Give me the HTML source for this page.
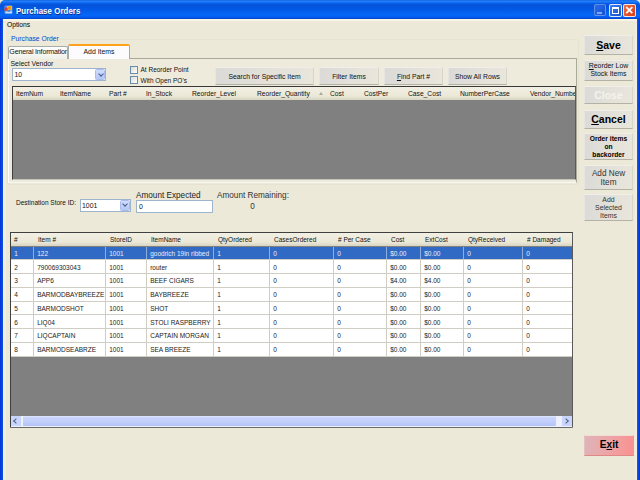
<!DOCTYPE html>
<html><head><meta charset="utf-8"><title>Purchase Orders</title>
<style>
html,body{margin:0;padding:0;}
body{width:640px;height:480px;overflow:hidden;background:#ece9d8;position:relative;font-family:"Liberation Sans",sans-serif;font-size:7px;color:#111;line-height:1;}
.a{position:absolute;white-space:nowrap;}
#tb{left:0;top:0;width:640px;height:19px;background:linear-gradient(#1868e0 0,#2080ff 9%,#0a5ee6 17%,#0452da 30%,#0358e4 45%,#0568f6 80%,#0458ee 93%,#0340c8 100%);border-radius:5px 5px 0 0;}
#bl{left:0;top:19px;width:5.5px;height:461px;background:linear-gradient(90deg,#0831d9 0,#0a50e0 45%,#1258e4 50%,#f3f0e2 56%,#f1eede 100%);}
#br{left:634.5px;top:19px;width:5.5px;height:461px;background:linear-gradient(90deg,#f1eede 0,#f3f0e2 44%,#1258e4 50%,#0a50e0 55%,#0831d9 100%);}
#bb{left:0;top:478px;width:640px;height:2px;background:#0a3fd6;}
#title{left:16px;top:6.7px;font-size:8.8px;font-weight:bold;color:#fff;letter-spacing:.1px;transform:scaleX(.89);transform-origin:0 0;text-shadow:.5px .5px 0 #0a2a8a;}
.wb{top:4px;width:12px;height:12px;border-radius:2px;border:.6px solid rgba(255,255,255,.85);box-sizing:border-box;}
.btn{background:linear-gradient(100deg,#dbdad8,#e2e0d8 50%,#e9e7dc);border:1px solid #d8d6cc;border-top-color:#efeee8;border-left-color:#e6e5e0;border-bottom-color:#b4b2a4;box-sizing:border-box;display:flex;align-items:center;justify-content:center;text-align:center;white-space:normal;}
.hdr{background:linear-gradient(#f2f0e4,#ebe8d7 70%,#d8d4c2);}
u{text-decoration-thickness:.7px;text-underline-offset:.6px;}
.cb{background:#fff;border:1px solid #9db4cc;box-sizing:border-box;font-size:6.9px;padding:3px 0 0 2px;}
.dd{width:11px;height:11px;border-radius:1.5px;background:linear-gradient(#d0dcfc,#b4c8f4);border:.5px solid #a8bcf0;box-sizing:border-box;}
.dd:after{content:"";position:absolute;left:2.5px;top:1.6px;width:3px;height:3px;border-right:1.7px solid #44588c;border-bottom:1.7px solid #44588c;transform:rotate(45deg);}
.ck{width:8px;height:8.2px;border:1px solid #6c8cac;background:linear-gradient(135deg,#dcdcd4,#fff);box-sizing:border-box;}
.g1h span,.g2h span{position:absolute;top:3.5px;}
.row{left:11px;width:561px;height:13.75px;background:#fff;font-size:6.5px;color:#222;box-sizing:border-box;border-bottom:1px solid #d0cec4;overflow:hidden}
.row span{position:absolute;top:0;height:13.75px;box-sizing:border-box;padding:4.3px 0 0 3.2px;border-right:1px solid #d0cec4;overflow:hidden}
.row.sel{background:#316ac5;color:#e8eefc}
.row.sel span{border-right-color:#8eaee0}
.arl,.arr{width:4px;height:4px;border-left:1.6px solid #4d6185;border-bottom:1.6px solid #4d6185;transform:rotate(45deg);box-sizing:border-box}
.arr{transform:rotate(-135deg)}
</style></head><body>
<div class="a" id="tb"></div>
<div class="a" id="bl"></div><div class="a" id="br"></div>
<!-- icon -->
<svg class="a" style="left:4.4px;top:5.3px" width="8.8" height="9.2" viewBox="0 0 14 15"><rect x="0.5" y="1" width="13" height="13" rx="1.5" fill="#5c92ec"/><rect x="5" y="1.5" width="8" height="6.5" fill="#f5c020"/><rect x="6.5" y="3" width="5" height="3.5" fill="#f08a28"/><ellipse cx="3.2" cy="7.2" rx="2.6" ry="3.6" fill="#e23c28"/><rect x="2.5" y="9.5" width="10.5" height="4" fill="#9cc4f4"/><rect x="5.5" y="8" width="4" height="3" fill="#3a8ad8"/><rect x="2" y="12.2" width="11" height="1.3" fill="#e8eefc"/></svg>
<div class="a" id="title">Purchase Orders</div>
<!-- window buttons -->
<div class="a wb" style="left:594px;background:linear-gradient(135deg,#2a6cec,#1550d0);border-color:rgba(255,255,255,.3)"></div>
<div class="a" style="left:597px;top:12px;width:5px;height:1.6px;background:#7fa8f4"></div>
<div class="a wb" style="left:609px;width:12.7px;height:12.6px;background:linear-gradient(135deg,#3a80f4,#1a50c8);"></div>
<div class="a" style="left:612px;top:7px;width:7px;height:7px;border:.8px solid #fff;border-top-width:2px;box-sizing:border-box"></div>
<div class="a wb" style="left:623.4px;top:4.3px;width:12.6px;height:12.4px;background:linear-gradient(135deg,#ee7048,#d83c14);"></div>
<svg class="a" style="left:623.4px;top:4.3px" width="12.6" height="12.4" viewBox="0 0 12.6 12.4"><path d="M3.3 3.2L9.3 9.2M9.3 3.2L3.3 9.2" stroke="#fff" stroke-width="1.7" stroke-linecap="butt" fill="none"/></svg>
<!-- menu -->
<div class="a" style="left:3px;top:19px;width:634px;height:3.5px;background:linear-gradient(#fbfce2 0,#f6f2de 45%,#f1e6da 65%,#ece9d8 100%)"></div>
<div class="a" style="left:7px;top:22.1px;font-size:6.7px;color:#000">Options</div>
<!-- group box -->
<div class="a" style="left:7px;top:39px;width:572px;height:146px;border:1px solid #e5e2d2;border-radius:3px;box-sizing:border-box"></div>
<div class="a" style="left:10px;top:36.2px;padding:0 1px;background:#ece9d8;font-size:6.75px;color:#0046d5">Purchase Order</div>
<!-- tab page -->
<div class="a" style="left:8px;top:58px;width:569px;height:125px;border:1px solid #a9a99a;border-left-color:#fff;border-bottom-color:#f8f7f0;background:#eeebdc;box-sizing:border-box"></div>
<div class="a" style="left:8px;top:46px;width:60px;height:13px;border:1px solid #a8aca8;border-bottom:none;border-radius:2px 2px 0 0;background:linear-gradient(#fff,#f0f0ea);box-sizing:border-box;font-size:7.1px;letter-spacing:-.18px;padding:1.7px 0 0 .3px;overflow:hidden">General Information</div>
<div class="a" style="left:68px;top:44px;width:62px;height:15px;border:1px solid #a8aca8;border-bottom:none;border-top:2px solid #ffa21a;border-radius:2px 2px 0 0;background:#fcfcfe;box-sizing:border-box;font-size:6.9px;text-align:center;padding-top:2.5px">Add Items</div>
<div class="a" style="left:10.5px;top:60.7px;font-size:6.9px">Select Vendor</div>
<div class="a cb" style="left:11.5px;top:67.5px;width:94.2px;height:13.75px;">10</div>
<div class="a dd" style="left:95.2px;top:69.2px;width:10px;height:10.6px"></div>
<div class="a ck" style="left:130px;top:65.5px"></div><div class="a" style="left:140.5px;top:67.3px;font-size:6.5px">At Reorder Point</div>
<div class="a ck" style="left:130px;top:76px"></div><div class="a" style="left:140.5px;top:78px;font-size:6.5px">With Open PO's</div>
<div class="a btn" style="left:215px;top:67px;width:99px;height:18px;padding-top:3.6px;font-size:6.8px">Search for Specific Item</div>
<div class="a btn" style="left:319px;top:67px;width:60px;height:18px;padding-top:3.6px;font-size:6.8px">Filter Items</div>
<div class="a btn" style="left:384px;top:67px;width:59px;height:18px;padding-top:3.6px;font-size:6.8px"><span><u>F</u>ind Part #</span></div>
<div class="a btn" style="left:448px;top:67px;width:59px;height:18px;padding-top:3.6px;font-size:6.8px">Show All Rows</div>
<!-- grid 1 -->
<div class="a" style="left:12px;top:85.5px;width:564px;height:94.5px;background:#808080;border:1px solid #404040;border-top:1.5px solid #383838;border-right-color:#5a5a5a;border-bottom-color:#c8c6bc;box-sizing:border-box"></div>
<div class="a hdr g1h" style="left:13px;top:87px;width:562px;height:13px;font-size:6.7px;overflow:hidden">
<span style="left:3px">ItemNum</span><span style="left:47px">ItemName</span><span style="left:96px">Part #</span><span style="left:133px">In_Stock</span><span style="left:179px">Reorder_Level</span><span style="left:244px">Reorder_Quantity</span><span style="left:317px">Cost</span><span style="left:351px">CostPer</span><span style="left:395px">Case_Cost</span><span style="left:447px">NumberPerCase</span><span style="left:517px">Vendor_Number</span>
</div>
<div class="a" style="left:319px;top:92px;width:0;height:0;border:2.5px solid transparent;border-top:none;border-bottom:3px solid #aca899"></div>
<!-- right buttons -->
<div class="a btn" style="left:584px;top:35px;width:49px;height:20px;font-size:10.5px;font-weight:bold;color:#000"><span><u>S</u>ave</span></div>
<div class="a btn" style="left:584px;top:60px;width:49px;height:21px;font-size:6.9px;line-height:7.5px;padding-bottom:1.5px"><span><u>R</u>eorder Low Stock Items</span></div>
<div class="a btn" style="left:584px;top:85.5px;width:49px;height:18.5px;font-size:10.5px;font-weight:bold;color:#f4f3ee"><span>Close</span></div>
<div class="a btn" style="left:584px;top:110px;width:49px;height:19px;font-size:10.5px;font-weight:bold;color:#000"><span><u>C</u>ancel</span></div>
<div class="a btn" style="left:584px;top:133px;width:49px;height:27px;font-size:6.7px;font-weight:bold;line-height:7.8px;color:#000;padding:1px 4px 0"><span>Order items on backorder</span></div>
<div class="a btn" style="left:584px;top:165px;width:49px;height:24.5px;font-size:8.2px;line-height:9.3px;color:#333;padding-top:2px"><span>Add New Item</span></div>
<div class="a btn" style="left:584px;top:194px;width:49px;height:27px;font-size:6.9px;line-height:8.2px;color:#333;padding:1.6px 8px 0"><span>Add Selected Items</span></div>
<div class="a btn" style="left:584.3px;top:434.7px;width:49.5px;height:21px;font-size:10.2px;font-weight:bold;color:#000;background:linear-gradient(100deg,#deb4b8,#eea4a6 50%,#fb9090);border-color:#f2dcd8 #f09898 #e08888 #e4c0c0"><span>E<u>x</u>it</span></div>
<!-- middle -->
<div class="a" style="left:16px;top:200.3px;font-size:6.5px">Destination Store ID:</div>
<div class="a cb" style="left:80px;top:198.5px;width:51px;height:13.5px;padding:3.8px 0 0 1px">1001</div>
<div class="a dd" style="left:119.5px;top:199.7px;height:11px;width:10.5px"></div>
<div class="a" style="left:136px;top:192.3px;font-size:8.2px;color:#222">Amount Expected</div>
<div class="a cb" style="left:136px;top:199.7px;width:77px;height:13px;">0</div>
<div class="a" style="left:217px;top:192.3px;font-size:8.2px;color:#333">Amount Remaining:</div>
<div class="a" style="left:250.3px;top:203px;font-size:8.2px;color:#333">0</div>
<!-- grid 2 -->
<div class="a" style="left:10px;top:232px;width:563px;height:196px;background:#808080;border:1px solid #404040;border-right-color:#5a5a5a;border-bottom-color:#c8c6bc;box-sizing:border-box"></div>
<div class="a hdr g2h" style="left:11px;top:233px;width:561px;height:13px;font-size:6.5px;overflow:hidden"><span style="left:3px">#</span><span style="left:27px">Item #</span><span style="left:99px">StoreID</span><span style="left:140px">ItemName</span><span style="left:207px">QtyOrdered</span><span style="left:263px">CasesOrdered</span><span style="left:327px"># Per Case</span><span style="left:380px">Cost</span><span style="left:414px">ExtCost</span><span style="left:457px">QtyReceived</span><span style="left:516px"># Damaged</span></div>
<div class="a row sel" style="top:246.60px"><span style="left:0px;width:23px">1</span><span style="left:23px;width:72px">122</span><span style="left:95px;width:41px">1001</span><span style="left:136px;width:67px">goodrich 19in ribbed</span><span style="left:203px;width:56px">1</span><span style="left:259px;width:64px">0</span><span style="left:323px;width:53px">0</span><span style="left:376px;width:34px">$0.00</span><span style="left:410px;width:43px">$0.00</span><span style="left:453px;width:59px">0</span><span style="left:512px;width:50px">0</span></div>
<div class="a row" style="top:260.35px"><span style="left:0px;width:23px">2</span><span style="left:23px;width:72px">790069303043</span><span style="left:95px;width:41px">1001</span><span style="left:136px;width:67px">router</span><span style="left:203px;width:56px">1</span><span style="left:259px;width:64px">0</span><span style="left:323px;width:53px">0</span><span style="left:376px;width:34px">$0.00</span><span style="left:410px;width:43px">$0.00</span><span style="left:453px;width:59px">0</span><span style="left:512px;width:50px">0</span></div>
<div class="a row" style="top:274.10px"><span style="left:0px;width:23px">3</span><span style="left:23px;width:72px">APP6</span><span style="left:95px;width:41px">1001</span><span style="left:136px;width:67px">BEEF CIGARS</span><span style="left:203px;width:56px">1</span><span style="left:259px;width:64px">0</span><span style="left:323px;width:53px">0</span><span style="left:376px;width:34px">$4.00</span><span style="left:410px;width:43px">$4.00</span><span style="left:453px;width:59px">0</span><span style="left:512px;width:50px">0</span></div>
<div class="a row" style="top:287.85px"><span style="left:0px;width:23px">4</span><span style="left:23px;width:72px">BARMODBAYBREEZE</span><span style="left:95px;width:41px">1001</span><span style="left:136px;width:67px">BAYBREEZE</span><span style="left:203px;width:56px">1</span><span style="left:259px;width:64px">0</span><span style="left:323px;width:53px">0</span><span style="left:376px;width:34px">$0.00</span><span style="left:410px;width:43px">$0.00</span><span style="left:453px;width:59px">0</span><span style="left:512px;width:50px">0</span></div>
<div class="a row" style="top:301.60px"><span style="left:0px;width:23px">5</span><span style="left:23px;width:72px">BARMODSHOT</span><span style="left:95px;width:41px">1001</span><span style="left:136px;width:67px">SHOT</span><span style="left:203px;width:56px">1</span><span style="left:259px;width:64px">0</span><span style="left:323px;width:53px">0</span><span style="left:376px;width:34px">$0.00</span><span style="left:410px;width:43px">$0.00</span><span style="left:453px;width:59px">0</span><span style="left:512px;width:50px">0</span></div>
<div class="a row" style="top:315.35px"><span style="left:0px;width:23px">6</span><span style="left:23px;width:72px">LIQ04</span><span style="left:95px;width:41px">1001</span><span style="left:136px;width:67px">STOLI RASPBERRY</span><span style="left:203px;width:56px">1</span><span style="left:259px;width:64px">0</span><span style="left:323px;width:53px">0</span><span style="left:376px;width:34px">$0.00</span><span style="left:410px;width:43px">$0.00</span><span style="left:453px;width:59px">0</span><span style="left:512px;width:50px">0</span></div>
<div class="a row" style="top:329.10px"><span style="left:0px;width:23px">7</span><span style="left:23px;width:72px">LIQCAPTAIN</span><span style="left:95px;width:41px">1001</span><span style="left:136px;width:67px">CAPTAIN MORGAN</span><span style="left:203px;width:56px">1</span><span style="left:259px;width:64px">0</span><span style="left:323px;width:53px">0</span><span style="left:376px;width:34px">$0.00</span><span style="left:410px;width:43px">$0.00</span><span style="left:453px;width:59px">0</span><span style="left:512px;width:50px">0</span></div>
<div class="a row" style="top:342.85px"><span style="left:0px;width:23px">8</span><span style="left:23px;width:72px">BARMODSEABRZE</span><span style="left:95px;width:41px">1001</span><span style="left:136px;width:67px">SEA BREEZE</span><span style="left:203px;width:56px">1</span><span style="left:259px;width:64px">0</span><span style="left:323px;width:53px">0</span><span style="left:376px;width:34px">$0.00</span><span style="left:410px;width:43px">$0.00</span><span style="left:453px;width:59px">0</span><span style="left:512px;width:50px">0</span></div>
<div class="a" style="left:11px;top:416px;width:561px;height:10.5px;background:#eef1fc;border-bottom:1px solid #6a6a6a"></div>
<div class="a" style="left:11px;top:416.3px;width:9.5px;height:10px;background:#c9d5fc"></div><div class="a" style="left:562px;top:416.3px;width:10px;height:10px;background:#c9d5fc"></div>
<div class="a" style="left:22.5px;top:416.3px;width:533px;height:10px;background:linear-gradient(#e4eaff 0,#cad6fd 15%,#c0cefb 60%,#b5c4f6);border-radius:1px"></div>
<div class="a arl" style="left:14px;top:418.8px"></div><div class="a arr" style="left:564px;top:418.8px"></div>
</body></html>
